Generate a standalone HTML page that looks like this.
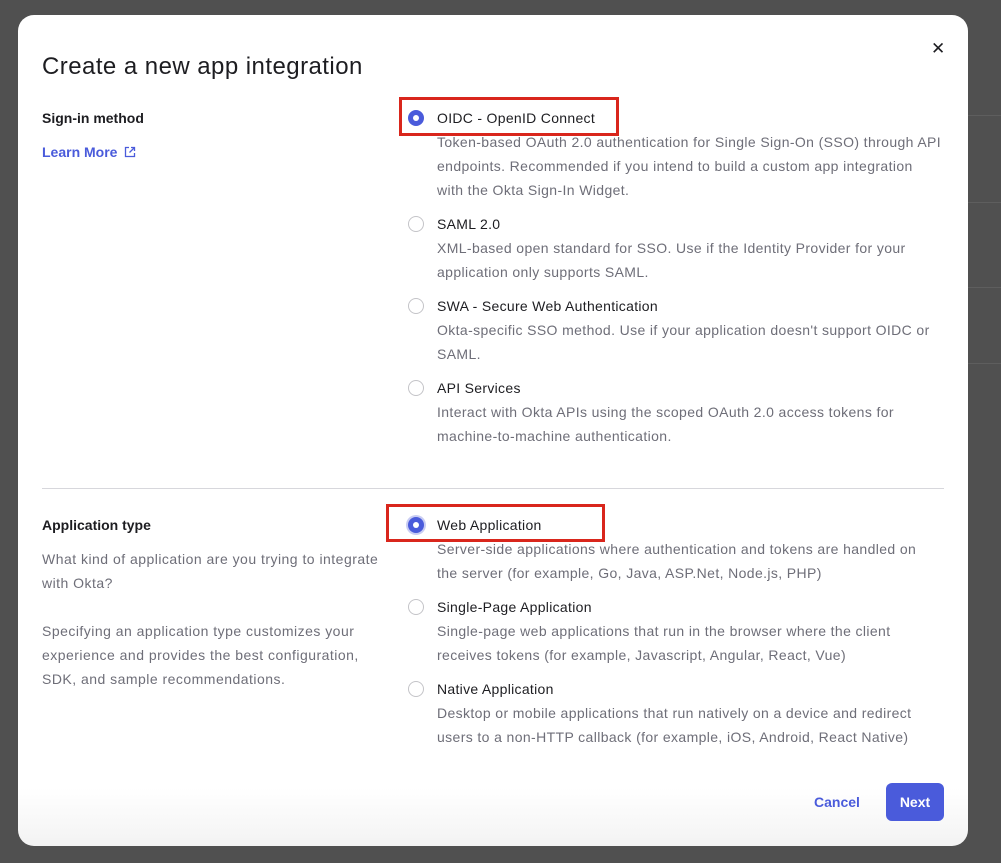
<!DOCTYPE html>
<html><head><meta charset="utf-8"><style>
*{margin:0;padding:0;box-sizing:border-box}
body{width:1001px;height:863px;background:#505050;font-family:"Liberation Sans",sans-serif;position:relative;overflow:hidden}
.line{position:absolute;left:968px;width:33px;height:1px;background:#5e5e5e}
.modal{position:absolute;left:18px;top:15px;width:950px;height:831px;background:linear-gradient(#fff 93%,#f3f3f3);border-radius:16px}
.a{position:absolute;white-space:nowrap}
h1{position:absolute;left:24px;top:38px;font-size:24px;font-weight:400;color:#1d1d21;letter-spacing:0.45px}
.lab{font-size:14px;font-weight:700;color:#1d1d21}
.t{font-size:14px;color:#1d1d21;letter-spacing:0.3px}
.d{font-size:14px;color:#6e6e78;line-height:24px;letter-spacing:0.38px}
.r{position:absolute;width:16px;height:16px;border-radius:50%;border:1.5px solid #c4c4c8;background:#fff}
.r.on{border:none;background:#4a5bdb}
.r.on::after{content:"";position:absolute;left:5px;top:5px;width:6px;height:6px;border-radius:50%;background:#fff}
.box{position:absolute;border:3px solid #d9261c}
</style></head><body>
<div class="line" style="top:115px"></div><div class="line" style="top:202px"></div><div class="line" style="top:287px"></div><div class="line" style="top:363px"></div>
<div class="modal">
<h1>Create a new app integration</h1>
<div class="a" style="left:913px;top:24px;font-size:17px;color:#1d1d21">✕</div>
<div class="a lab" style="left:24px;top:95px">Sign-in method</div>
<div class="a" style="left:24px;top:129px;font-size:14px;font-weight:700;color:#4a5bdb">Learn More <svg width="12" height="12" viewBox="0 0 12 12" style="vertical-align:-1px;margin-left:3px"><path d="M5 1.5H1.5v9h9V7M7 1.5h3.5V5M10.5 1.5 5.5 6.5" fill="none" stroke="#4a5bdb" stroke-width="1.3"/></svg></div>

<div class="r on" style="left:390px;top:95px"></div>
<div class="a t" style="left:419px;top:95px">OIDC - OpenID Connect</div>
<div class="a d" style="left:419px;top:115px">Token-based OAuth 2.0 authentication for Single Sign-On (SSO) through API<br>endpoints. Recommended if you intend to build a custom app integration<br>with the Okta Sign-In Widget.</div>
<div class="r" style="left:390px;top:201px"></div>
<div class="a t" style="left:419px;top:201px">SAML 2.0</div>
<div class="a d" style="left:419px;top:221px">XML-based open standard for SSO. Use if the Identity Provider for your<br>application only supports SAML.</div>
<div class="r" style="left:390px;top:283px"></div>
<div class="a t" style="left:419px;top:283px">SWA - Secure Web Authentication</div>
<div class="a d" style="left:419px;top:303px">Okta-specific SSO method. Use if your application doesn't support OIDC or<br>SAML.</div>
<div class="r" style="left:390px;top:365px"></div>
<div class="a t" style="left:419px;top:365px">API Services</div>
<div class="a d" style="left:419px;top:385px">Interact with Okta APIs using the scoped OAuth 2.0 access tokens for<br>machine-to-machine authentication.</div>

<div class="a" style="left:24px;top:473px;width:902px;height:1px;background:#d7d7dc"></div>

<div class="a lab" style="left:24px;top:502px">Application type</div>
<div class="a d" style="left:24px;top:532px;letter-spacing:0.48px">What kind of application are you trying to integrate<br>with Okta?<br><br>Specifying an application type customizes your<br>experience and provides the best configuration,<br>SDK, and sample recommendations.</div>
<div class="r on" style="left:390px;top:502px;box-shadow:0 0 0 2px #c8ccf3"></div>
<div class="a t" style="left:419px;top:502px">Web Application</div>
<div class="a d" style="left:419px;top:522px">Server-side applications where authentication and tokens are handled on<br>the server (for example, Go, Java, ASP.Net, Node.js, PHP)</div>
<div class="r" style="left:390px;top:584px"></div>
<div class="a t" style="left:419px;top:584px">Single-Page Application</div>
<div class="a d" style="left:419px;top:604px">Single-page web applications that run in the browser where the client<br>receives tokens (for example, Javascript, Angular, React, Vue)</div>
<div class="r" style="left:390px;top:666px"></div>
<div class="a t" style="left:419px;top:666px">Native Application</div>
<div class="a d" style="left:419px;top:686px">Desktop or mobile applications that run natively on a device and redirect<br>users to a non-HTTP callback (for example, iOS, Android, React Native)</div>

<div class="a" style="left:796px;top:779px;font-size:14px;font-weight:700;color:#4a5bdb">Cancel</div>
<div class="a" style="left:868px;top:768px;width:58px;height:38px;background:#4a5bdb;border-radius:6px;color:#fff;font-size:14px;font-weight:700;text-align:center;line-height:38px">Next</div>
</div>
<div class="box" style="left:399px;top:97px;width:220px;height:39px"></div>
<div class="box" style="left:386px;top:504px;width:219px;height:38px"></div>
</body></html>
